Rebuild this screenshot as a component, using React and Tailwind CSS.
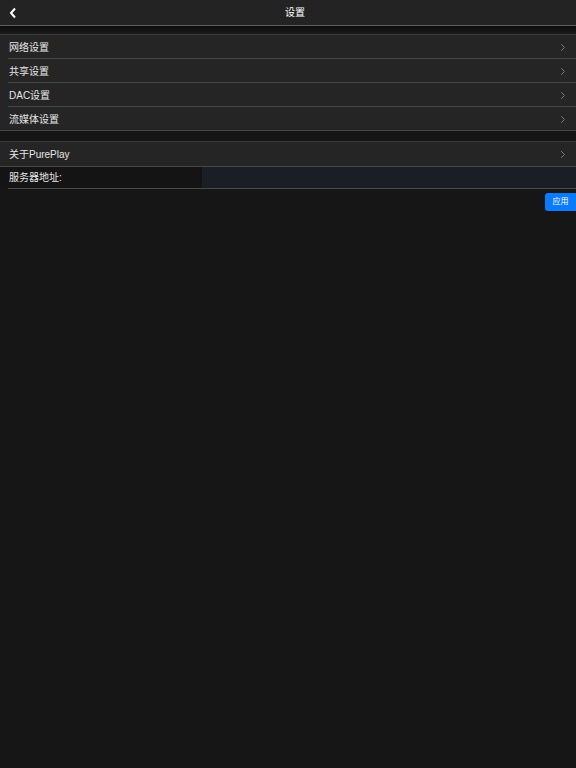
import React from 'react';

const font = { fontFamily: '"Liberation Sans", "Noto Sans CJK SC", sans-serif' };

const Chevron = () => (
  <svg width="6" height="9" viewBox="0 0 6 9" className="text-[#7a7a7a]">
    <path d="M1.2 1.2l3.3 3.3-3.3 3.3" fill="none" stroke="currentColor" strokeWidth="1" />
  </svg>
);

const Row = ({ label, last, tall }) => (
  <div className={`${tall ? 'h-[25px]' : 'h-[24px]'} bg-[#252525] relative flex items-center justify-between pl-[9px] pr-[10px]`}>
    <span className="text-[10px] text-[#e6e6e6]">{label}</span>
    <Chevron />
    <div className={`absolute bottom-0 right-0 h-px bg-[#474747] ${last ? 'left-0' : 'left-[8px]'}`} />
  </div>
);

const App = () => {
  return (
    <div className="w-[576px] h-[768px] bg-[#161616] overflow-hidden" style={font}>
      <div className="h-[25px] bg-[#232323] flex items-center relative">
        <svg width="8" height="12" viewBox="0 0 8 12" className="ml-[9px] text-white">
          <path d="M6 1.5L2 6l4 4.5" fill="none" stroke="currentColor" strokeWidth="2" />
        </svg>
        <span className="absolute left-[285px] text-[10px] text-white">设置</span>
      </div>
      <div className="h-px bg-[#5e5e5e]" />
      <div className="h-[8px] bg-gradient-to-b from-[#0c0c0c] to-[#1a1a1a]" />
      <div className="h-px bg-[#3c3c3c]" />
      <Row label="网络设置" />
      <Row label="共享设置" />
      <Row label="DAC设置" />
      <Row label="流媒体设置" last />
      <div className="h-[10px] bg-[#151515]" />
      <div className="h-px bg-[#3a3a3a]" />
      <Row label="关于PurePlay" last tall />
      <div className="h-[21px] flex">
        <div className="w-[202px] bg-[#141414] flex items-center pl-[9px]">
          <span className="text-[10px] text-[#e6e6e6]">服务器地址:</span>
        </div>
        <div className="flex-1 bg-[#1a1f26]" />
      </div>
      <div className="h-px bg-[#4a4a4a] ml-[8px]" />
      <div className="flex justify-end mt-[4px]">
        <button className="w-[31px] h-[18px] bg-[#0a7aff] rounded-l-[3px] text-[8px] text-white flex items-center justify-center">
          应用
        </button>
      </div>
    </div>
  );
};

export default App;
